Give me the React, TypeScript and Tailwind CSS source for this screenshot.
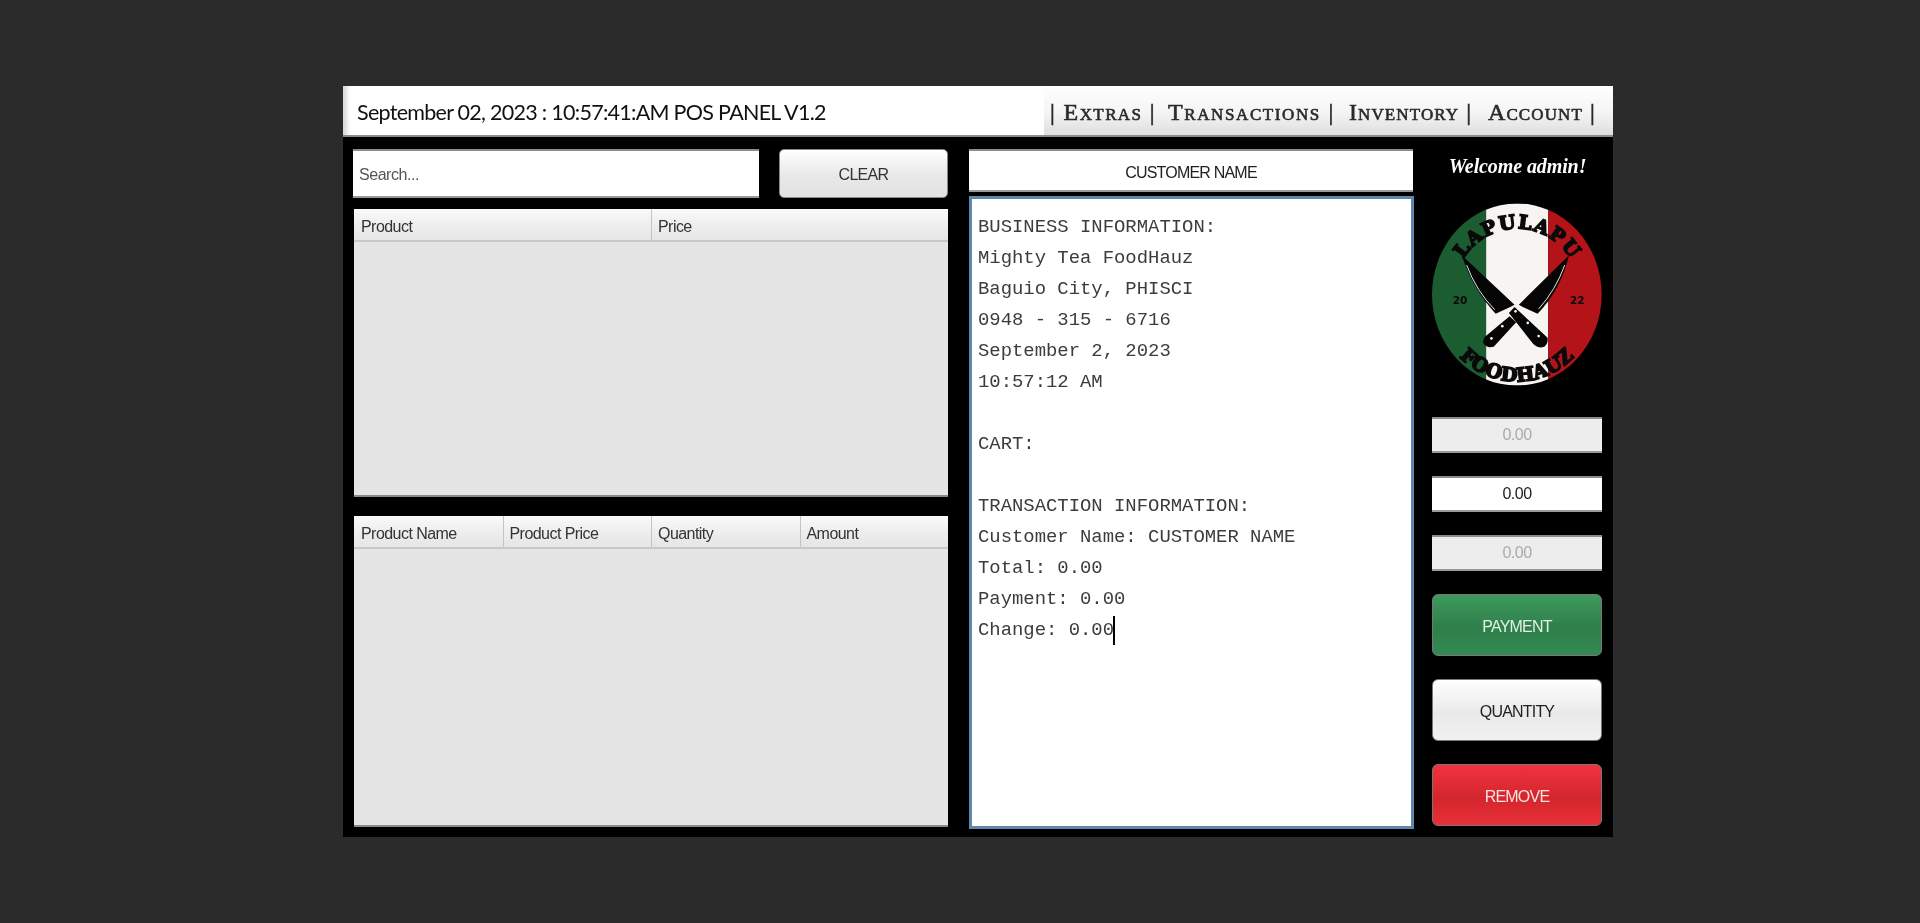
const sans = { fontFamily: '"Liberation Sans", Arial, sans-serif' };

const receipt = `BUSINESS INFORMATION:
Mighty Tea FoodHauz
Baguio City, PHISCI
0948 - 315 - 6716
September 2, 2023
10:57:12 AM

CART:

TRANSACTION INFORMATION:
Customer Name: CUSTOMER NAME
Total: 0.00
Payment: 0.00
Change: 0.00`;

function Logo() {
  return (
    <svg viewBox="35 38 515 552" className="w-[172px] h-[185px] block">
      <defs>
        <clipPath id="disc">
          <ellipse cx="292" cy="314" rx="257" ry="276" />
        </clipPath>
        <path id="topArc" d="M 125 215 A 190 190 0 0 1 460 215" fill="none" />
        <path id="bottomArc" d="M 80 450 A 240 240 0 0 0 504 450" fill="none" />
      </defs>
      <g clipPath="url(#disc)">
        <rect x="35" y="38" width="164" height="552" fill="#1b5c30" />
        <rect x="199" y="38" width="188" height="552" fill="#f8f4f1" />
        <rect x="387" y="38" width="163" height="552" fill="#b41419" />
      </g>
      <g fontFamily='"DejaVu Serif", serif' fontWeight="bold" fontSize="58" fill="#0a0a0a" stroke="#0a0a0a" strokeWidth="5" textAnchor="middle">
        <text>
          <textPath href="#topArc" startOffset="50%" textLength="390" lengthAdjust="spacing">LAPULAPU</textPath>
        </text>
        <text>
          <textPath href="#bottomArc" startOffset="50%" textLength="390" lengthAdjust="spacing">FOODHAUZ</textPath>
        </text>
      </g>
      <text x="120" y="342" fontFamily='"DejaVu Sans", sans-serif' fontWeight="bold" fontSize="32" fill="#0a0a0a" textAnchor="middle">20</text>
      <text x="475" y="342" fontFamily='"DejaVu Sans", sans-serif' fontWeight="bold" fontSize="32" fill="#0a0a0a" textAnchor="middle">22</text>
      {/* knives */}
      <path d="M125 195 L285 345 L272 352 L228 372 Q160 300 125 195Z" fill="#050505" />
      <path d="M450 195 L298 345 L310 352 L355 372 Q425 300 450 195Z" fill="#050505" />
      <path d="M140 225 Q170 305 225 360" fill="none" stroke="#e8e8e8" strokeWidth="3" />
      <path d="M437 225 Q410 300 358 358" fill="none" stroke="#e8e8e8" strokeWidth="3" />
      <path d="M268 370 L285 352 L385 445 Q388 462 375 472 Q355 480 340 462Z" fill="#050505" />
      <path d="M270 380 L290 398 L222 472 Q200 478 190 460 Q190 445 200 438Z" fill="#050505" />
      <circle cx="288" cy="365" r="4" fill="#f8f4f1" />
      <circle cx="325" cy="400" r="4" fill="#f8f4f1" />
      <circle cx="358" cy="440" r="4" fill="#f8f4f1" />
      <circle cx="248" cy="410" r="4" fill="#f8f4f1" />
      <circle cx="215" cy="447" r="4" fill="#f8f4f1" />
    </svg>
  );
}

function ProductTable({ columns, height }: { columns: string[]; height: string }) {
  return (
    <div className={`${height} ml-[1px] flex flex-col bg-[#e5e5e5] border-b-2 border-[#8a8a8a]`}>
      <div className={`h-[33px] grid ${columns.length === 2 ? "grid-cols-2" : "grid-cols-4"} bg-[linear-gradient(#fafafa,#ececec_60%,#e6e6e6)] border-b-2 border-[#c8c8c8]`}>
        {columns.map((c, i) => (
          <div key={c} className={`pt-[4px] flex items-center text-[16px] tracking-[-0.55px] text-[#333] ${i > 0 ? "pl-[6px] border-l border-[#c4c4c4]" : "pl-[7px]"}`} style={sans}>
            {c}
          </div>
        ))}
      </div>
    </div>
  );
}

function Amount({ active }: { active?: boolean }) {
  return (
    <div className={`h-[36px] flex items-center justify-center text-[16px] tracking-[-0.5px] border-y-2 border-t-[#8c8c8c] border-b-[#9a9a9a] ${active ? "bg-white text-[#222]" : "bg-[#ededed] text-[#aaa]"}`} style={sans}>
      0.00
    </div>
  );
}

function ActionButton({ label, className }: { label: string; className: string }) {
  return (
    <button className={`h-[62px] rounded-[6px] border border-[#777] pt-[3px] text-[16px] tracking-[-0.8px] ${className}`} style={sans}>
      {label}
    </button>
  );
}

export default function App() {
  return (
    <div className="min-h-[923px] bg-[#2b2b2b] pl-[343px] pt-[86px]">
      <div className="w-[1270px] h-[751px] bg-black flex flex-col blur-[0.4px]">
        {/* top bar */}
        <div className="h-[51px] flex border-b-2 border-[#8c8c8c]">
          <div className="w-[701px] bg-white pl-[14px] pt-[3px] flex items-center text-[21.5px] tracking-[-0.72px] text-[#111] shadow-[inset_7px_0_4px_-3px_#d8d8d8]" style={{ fontFamily: "Lato, sans-serif" }}>
            September 02, 2023 : 10:57:41:AM POS PANEL V1.2
          </div>
          <div className="flex-1 flex items-center pl-[6px] pt-[3px] text-[24px] tracking-[1.1px] text-[#2a2a2a] [-webkit-text-stroke:0.6px_#2a2a2a] [font-variant:small-caps] whitespace-pre bg-[linear-gradient(#ffffff,#f4f4f4_55%,#dedede)]" style={{ fontFamily: '"Liberation Serif", serif' }}>
            <span className="w-[118px] tracking-[1.4px]">| Extras |</span>
            <span className="w-[181px] tracking-[1.6px]">Transactions |</span>
            <span className="w-[139px]">Inventory |</span>
            <span>Account |</span>
          </div>
        </div>

        <div className="flex-1 flex pl-[10px] pt-[12px]">
          {/* left column */}
          <div className="w-[595px] flex flex-col">
            <div className="flex justify-between h-[49px]">
              <input
                placeholder="Search..."
                className="w-[406px] bg-white pl-[6px] pt-[2px] text-[16px] tracking-[-0.45px] text-[#444] placeholder:text-[#555] border-y-2 border-t-[#8c8c8c] border-b-[#9a9a9a] outline-none"
                style={sans}
              />
              <button className="w-[169px] rounded-[5px] border border-[#888] pt-[2px] text-[16px] tracking-[-0.7px] text-[#333] bg-[linear-gradient(#ffffff,#e8e8e8_55%,#e2e2e2)]" style={sans}>
                CLEAR
              </button>
            </div>
            <div className="mt-[11px]">
              <ProductTable columns={["Product", "Price"]} height="h-[288px]" />
            </div>
            <div className="mt-[19px]">
              <ProductTable columns={["Product Name", "Product Price", "Quantity", "Amount"]} height="h-[311px]" />
            </div>
          </div>

          {/* receipt column */}
          <div className="w-[445px] ml-[21px] flex flex-col">
            <input
              readOnly
              value="CUSTOMER NAME"
              className="h-[43px] mr-[1px] pt-[4px] bg-white text-center text-[16px] tracking-[-0.8px] text-[#222] border-y-2 border-t-[#8c8c8c] border-b-[#9a9a9a] outline-none"
              style={sans}
            />
            <pre className="mt-[4px] h-[633px] bg-white border-[3px] border-[#5f86ad] pl-[6px] pt-[13px] text-[18.9px] leading-[31px] text-[#3c3c3c]" style={{ fontFamily: '"Liberation Mono", monospace' }}>
              {receipt}
              <span className="inline-block w-[2px] h-[29px] -ml-[1px] -mr-[1px] align-middle bg-black" />
            </pre>
          </div>

          {/* right column */}
          <div className="w-[170px] ml-[18px] flex flex-col">
            <div className="h-[30px] pt-[3px] pl-[1px] flex items-center justify-center text-[20px] font-bold italic tracking-[-0.1px] text-white" style={{ fontFamily: '"Liberation Serif", serif' }}>
              Welcome admin!
            </div>
            <div className="mt-[23px] flex justify-center">
              <Logo />
            </div>
            <div className="mt-[30px] flex flex-col gap-[23px]">
              <Amount />
              <Amount active />
              <Amount />
            </div>
            <div className="mt-[23px] flex flex-col gap-[23px]">
              <ActionButton label="PAYMENT" className="text-[#e2efe6] bg-[linear-gradient(#3f9a5e,#2e7f4a_55%,#348a52)]" />
              <ActionButton label="QUANTITY" className="text-[#222] bg-[linear-gradient(#ffffff,#e9e9e9_55%,#f1f1f1)]" />
              <ActionButton label="REMOVE" className="text-[#fbe0e0] bg-[linear-gradient(#f2333f,#d3262c_55%,#ea2f38)]" />
            </div>
          </div>
        </div>
      </div>
    </div>
  );
}
